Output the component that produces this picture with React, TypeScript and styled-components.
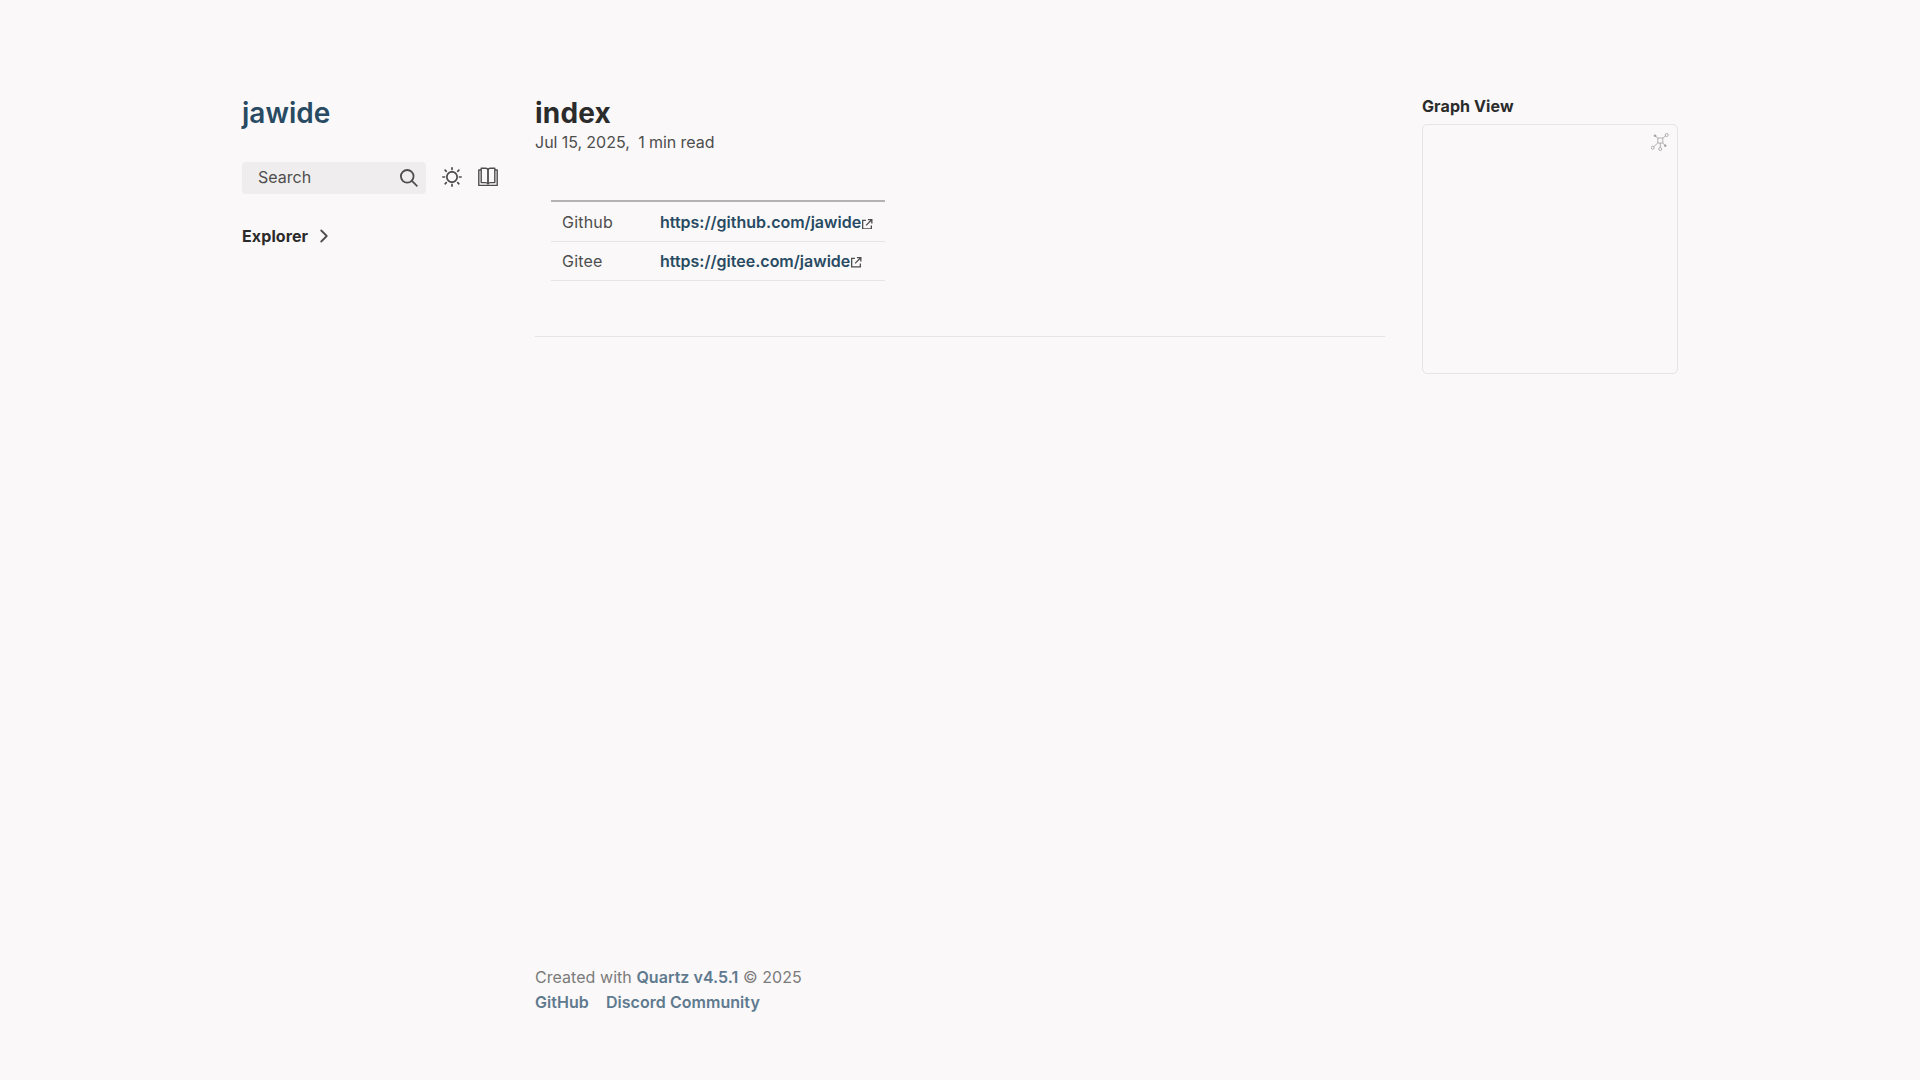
import React from 'react'
import styled, { createGlobalStyle } from 'styled-components'

const GlobalStyle = createGlobalStyle`
  html, body {
    margin: 0;
    padding: 0;
    background: #faf8f8;
    color: #4e4e4e;
    font-family: Inter, "Noto Sans", sans-serif;
    font-size: 16px;
    line-height: 24px;
  }
  * {
    box-sizing: border-box;
  }
`

const Page = styled.div`
  width: 1500px;
  min-height: 1080px;
  margin: 0 auto;
  display: grid;
  grid-template-columns: 320px 1fr 320px;
  column-gap: 5px;
`

const LeftSidebar = styled.aside`
  padding: 96px 32px 0;
  display: flex;
  flex-direction: column;
  gap: 32px;
`

const SiteTitle = styled.h2`
  margin: 0;
  font-size: 28px;
  line-height: 34px;
  font-weight: 600;
  color: #284b63;
`

const SearchRow = styled.div`
  display: flex;
  align-items: center;
  gap: 16px;
`

const SearchButton = styled.div`
  flex: 0 0 184px;
  height: 32px;
  border-radius: 4px;
  background: rgba(43, 43, 43, 0.05);
  display: flex;
  align-items: center;
  justify-content: space-between;
  padding: 0 8px 0 16px;
  color: #4e4e4e;
`

const SearchLabel = styled.span`
  margin-top: -2px;
`

const IconButton = styled.div`
  width: 20px;
  height: 20px;
  margin-top: -2px;
  display: flex;
  color: #4e4e4e;
`

const ExplorerToggle = styled.div`
  margin-top: -2px;
  display: flex;
  align-items: center;
  gap: 5px;
  font-weight: 700;
  letter-spacing: 0.1px;
  color: #2b2b2b;
`

const Center = styled.main`
  padding-top: 96px;
  display: flex;
  flex-direction: column;
`

const PageTitle = styled.h1`
  margin: 0;
  font-size: 28px;
  line-height: 34px;
  font-weight: 700;
  letter-spacing: 0.2px;
  color: #2b2b2b;
`

const Meta = styled.p`
  margin: 0;
  line-height: 24px;
  color: #4e4e4e;
  white-space: pre;
  word-spacing: -0.3px;
`

const Table = styled.table`
  margin: 46px 0 0 16px;
  width: 334px;
  border-collapse: collapse;
  border-top: 2px solid #b3b3b3;

  tr:first-child td {
    padding-top: 2px;
  }
`

const Row = styled.tr`
  border-bottom: 1px solid #e5e5e5;
`

const LabelCell = styled.td<{ $height: number }>`
  width: 109px;
  height: ${({ $height }) => $height}px;
  padding: 0 0 0 11px;
  letter-spacing: 0.2px;
`

const LinkCell = styled.td`
  padding: 0;
`

const ExternalAnchor = styled.a`
  color: #284b63;
  font-weight: 600;
  text-decoration: none;
  white-space: nowrap;
`

const ExternalMark = styled.svg`
  width: 10.5px;
  height: 10.5px;
  margin-left: 1px;
  fill: #4e4e4e;
  vertical-align: -1px;
`

const Rule = styled.hr`
  width: 100%;
  height: 1px;
  margin: 55px 0 0;
  border: 0;
  background: #e5e5e5;
`

const Footer = styled.footer`
  margin-top: auto;
  padding-bottom: 65px;
  color: #7b7b7b;
`

const FooterLine = styled.p`
  margin: 0;
  line-height: 25px;
  letter-spacing: 0.05px;
`

const FooterLinks = styled.ul`
  margin: 0;
  padding: 0;
  list-style: none;
  display: flex;
  gap: 17px;
  line-height: 25px;
  letter-spacing: 0.05px;
`

const FooterLink = styled.a`
  color: #5f7a8f;
  font-weight: 600;
  text-decoration: none;
`

const RightSidebar = styled.aside`
  padding: 96px 32px 0;
`

const GraphTitle = styled.h3`
  margin: 0 0 7px;
  font-size: 16px;
  line-height: 21px;
  font-weight: 700;
  letter-spacing: 0.1px;
  color: #2b2b2b;
`

const GraphBox = styled.div`
  position: relative;
  height: 250px;
  border: 1px solid #e5e5e5;
  border-radius: 5px;
`

const GraphIcon = styled.svg`
  position: absolute;
  top: 8px;
  right: 8px;
  width: 18px;
  height: 18px;
  fill: none;
  stroke: #a0a0a0;
  stroke-width: 0.8;
`

function SearchIcon() {
  return (
    <svg width="18" height="18" viewBox="0 0 19.9 19.7" fill="none" stroke="#4e4e4e" strokeWidth="2">
      <path strokeLinecap="square" d="M18.5 18.3l-5.4-5.4" />
      <circle cx="8" cy="8" r="7" />
    </svg>
  )
}

function SunIcon() {
  return (
    <svg width="20" height="20" viewBox="0 0 35 35" fill="currentColor">
      <path d="M6,17.5C6,16.672,5.328,16,4.5,16h-3C0.672,16,0,16.672,0,17.5S0.672,19,1.5,19h3C5.328,19,6,18.328,6,17.5z M7.5,26c-0.414,0-0.789,0.168-1.061,0.439l-2,2C4.168,28.711,4,29.086,4,29.5C4,30.328,4.671,31,5.5,31c0.414,0,0.789-0.168,1.06-0.44l2-2C8.832,28.289,9,27.914,9,27.5C9,26.672,8.329,26,7.5,26z M17.5,6C18.329,6,19,5.328,19,4.5v-3C19,0.672,18.329,0,17.5,0S16,0.672,16,1.5v3C16,5.328,16.671,6,17.5,6z M27.5,9c0.414,0,0.789-0.168,1.06-0.439l2-2C30.832,6.289,31,5.914,31,5.5C31,4.672,30.329,4,29.5,4c-0.414,0-0.789,0.168-1.061,0.44l-2,2C26.168,6.711,26,7.086,26,7.5C26,8.328,26.671,9,27.5,9z M6.439,8.561C6.711,8.832,7.086,9,7.5,9C8.328,9,9,8.328,9,7.5c0-0.414-0.168-0.789-0.439-1.061l-2-2C6.289,4.168,5.914,4,5.5,4C4.672,4,4,4.672,4,5.5c0,0.414,0.168,0.789,0.439,1.06L6.439,8.561z M33.5,16h-3c-0.828,0-1.5,0.672-1.5,1.5s0.672,1.5,1.5,1.5h3c0.828,0,1.5-0.672,1.5-1.5S34.328,16,33.5,16z M28.561,26.439C28.289,26.168,27.914,26,27.5,26c-0.828,0-1.5,0.672-1.5,1.5c0,0.414,0.168,0.789,0.439,1.06l2,2C28.711,30.832,29.086,31,29.5,31c0.828,0,1.5-0.672,1.5-1.5c0-0.414-0.168-0.789-0.439-1.061L28.561,26.439z M17.5,29c-0.829,0-1.5,0.672-1.5,1.5v3c0,0.828,0.671,1.5,1.5,1.5s1.5-0.672,1.5-1.5v-3C19,29.672,18.329,29,17.5,29z M17.5,7C11.71,7,7,11.71,7,17.5S11.71,28,17.5,28S28,23.29,28,17.5S23.29,7,17.5,7z M17.5,25c-4.136,0-7.5-3.364-7.5-7.5c0-4.136,3.364-7.5,7.5-7.5c4.136,0,7.5,3.364,7.5,7.5C25,21.636,21.636,25,17.5,25z" />
    </svg>
  )
}

function BookIcon() {
  return (
    <svg width="20" height="20" viewBox="0 0 20 20" fill="none" stroke="currentColor" strokeWidth="1.4" strokeLinejoin="round">
      <path d="M3.2 1.2h4.3C9 1.2 10 2 10 3.2v13.6c-.5-.9-1.3-1.2-2.5-1.2H3.2z" />
      <path d="M16.8 1.2h-4.3C11 1.2 10 2 10 3.2v13.6c.5-.9 1.3-1.2 2.5-1.2h4.3z" />
      <path d="M3.2 3H.8v15.4h18.4V3h-2.4" />
    </svg>
  )
}

function Chevron() {
  return (
    <svg width="22" height="22" viewBox="0 0 24 24" fill="none" stroke="#4e4e4e" strokeWidth="2" strokeLinecap="round" strokeLinejoin="round">
      <polyline points="9 18 15 12 9 6" />
    </svg>
  )
}

function ExternalLink({ href }: { href: string }) {
  return (
    <ExternalAnchor href={href}>
      {href}
      <ExternalMark viewBox="0 0 512 512">
        <path d="M320 0H288V64h32 82.7L201.4 265.4 178.7 288 224 333.3l22.6-22.6L448 109.3V192v32h64V192 32 0H480 320zM32 32H0V64 480v32H32 456h32V480 352 320H424v32 96H64V96h96 32V32H160 32z" />
      </ExternalMark>
    </ExternalAnchor>
  )
}

export default function App() {
  return (
    <>
      <GlobalStyle />
      <Page>
        <LeftSidebar>
          <SiteTitle>jawide</SiteTitle>
          <SearchRow>
            <SearchButton>
              <SearchLabel>Search</SearchLabel>
              <SearchIcon />
            </SearchButton>
            <IconButton>
              <SunIcon />
            </IconButton>
            <IconButton>
              <BookIcon />
            </IconButton>
          </SearchRow>
          <ExplorerToggle>
            Explorer
            <Chevron />
          </ExplorerToggle>
        </LeftSidebar>
        <Center>
          <PageTitle>index</PageTitle>
          <Meta>Jul 15, 2025,  1 min read</Meta>
          <Table>
            <tbody>
              <Row>
                <LabelCell $height={40}>Github</LabelCell>
                <LinkCell>
                  <ExternalLink href="https://github.com/jawide" />
                </LinkCell>
              </Row>
              <Row>
                <LabelCell $height={39}>Gitee</LabelCell>
                <LinkCell>
                  <ExternalLink href="https://gitee.com/jawide" />
                </LinkCell>
              </Row>
            </tbody>
          </Table>
          <Rule />
          <Footer>
            <FooterLine>
              Created with <FooterLink href="#">Quartz v4.5.1</FooterLink> © 2025
            </FooterLine>
            <FooterLinks>
              <li>
                <FooterLink href="#">GitHub</FooterLink>
              </li>
              <li>
                <FooterLink href="#">Discord Community</FooterLink>
              </li>
            </FooterLinks>
          </Footer>
        </Center>
        <RightSidebar>
          <GraphTitle>Graph View</GraphTitle>
          <GraphBox>
            <GraphIcon viewBox="0 0 18 18">
              <path d="M6.8 5h5v5h-5zM6.8 5L4 2.7M11.8 5l3-2.2M6.8 10l-4.2 3.8M11.8 10l2.5 2.7M9.3 10v4.6" />
              <circle cx="15.7" cy="2" r="1.5" />
              <circle cx="1.7" cy="14.7" r="1.5" />
              <circle cx="9.2" cy="16" r="1.5" />
              <circle cx="4" cy="2.7" r="0.9" fill="#a0a0a0" />
              <circle cx="14.3" cy="12.7" r="0.9" fill="#a0a0a0" />
            </GraphIcon>
          </GraphBox>
        </RightSidebar>
      </Page>
    </>
  )
}
